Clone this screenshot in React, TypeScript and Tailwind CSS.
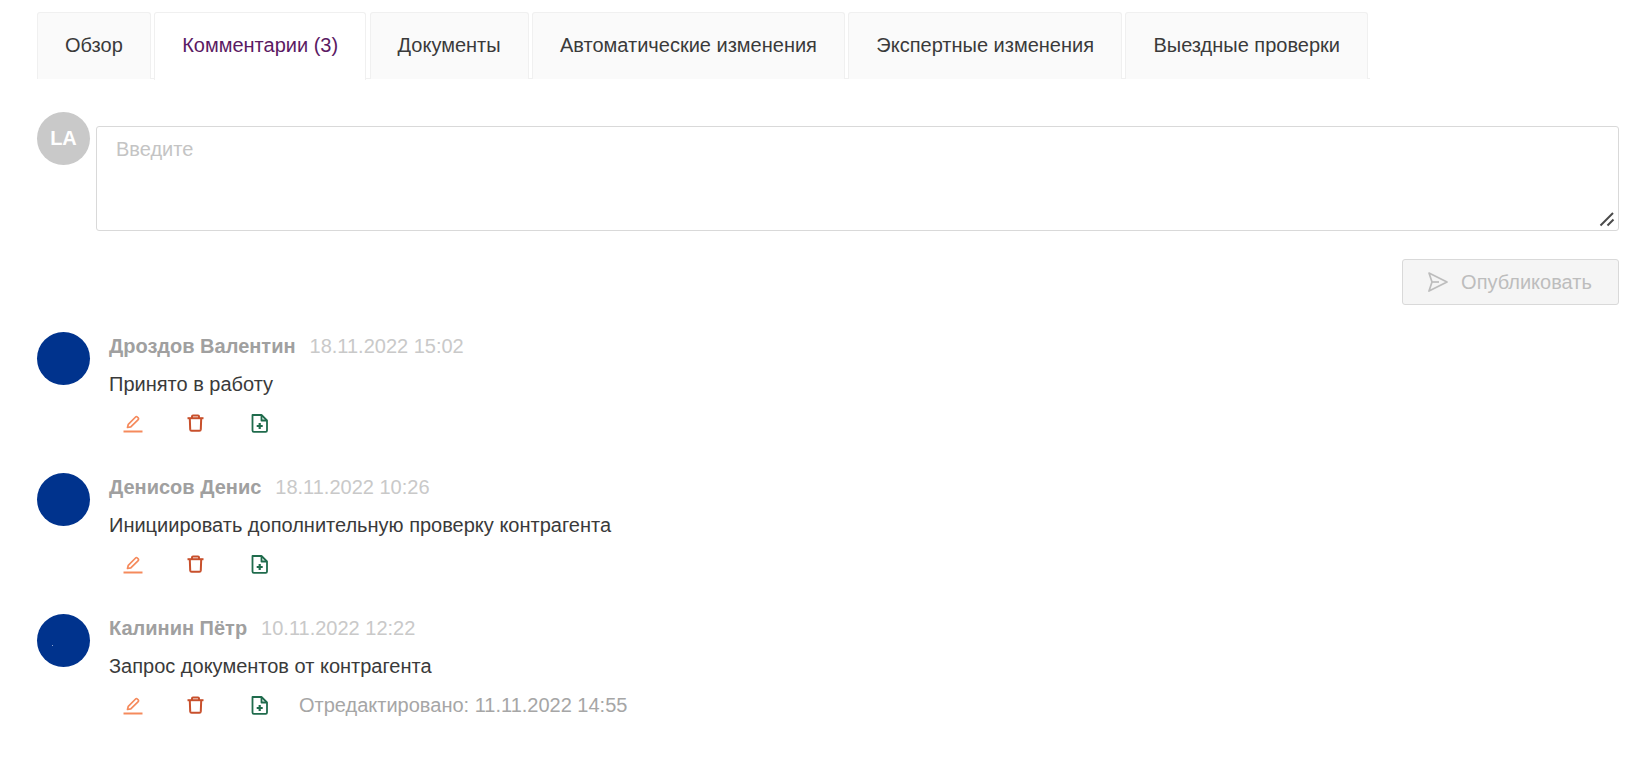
const TABS = [
  { label: "Обзор", active: false },
  { label: "Комментарии (3)", active: true },
  { label: "Документы", active: false },
  { label: "Автоматические изменения", active: false },
  { label: "Экспертные изменения", active: false },
  { label: "Выездные проверки", active: false },
];

const COMMENTS = [
  { author: "Дроздов Валентин", date: "18.11.2022 15:02", text: "Принято в работу", edited: "" },
  { author: "Денисов Денис", date: "18.11.2022 10:26", text: "Инициировать дополнительную проверку контрагента", edited: "" },
  { author: "Калинин Пётр", date: "10.11.2022 12:22", text: "Запрос документов от контрагента", edited: "Отредактировано: 11.11.2022 14:55" },
];

const EditIcon = () => (
  <svg width="20" height="20" viewBox="0 0 20 20" fill="none" stroke="#f58a5c" strokeWidth="1.7" strokeLinejoin="round">
    <path d="M4.5 14.5 L5.3 11.3 L12.6 4 a1.2 1.2 0 0 1 1.7 0 L15.2 4.9 a1.2 1.2 0 0 1 0 1.7 L7.8 13.9 Z" />
    <path d="M0.5 18.5 H19.5" strokeWidth="2" />
  </svg>
);

const TrashIcon = () => (
  <svg width="17" height="18" viewBox="0 0 17 18" fill="none" stroke="#c8502c" strokeWidth="2" strokeLinejoin="round">
    <path d="M0.5 4.2 H16.5" />
    <path d="M5 4 V2.4 a1 1 0 0 1 1 -1 H11 a1 1 0 0 1 1 1 V4" />
    <path d="M2.8 4.2 L3.2 15.4 a1.4 1.4 0 0 0 1.4 1.3 H12.4 a1.4 1.4 0 0 0 1.4 -1.3 L14.2 4.2" />
  </svg>
);

const NoteIcon = () => (
  <svg width="17" height="19" viewBox="0 0 17 19" fill="none" stroke="#1f6b4c" strokeWidth="1.8" strokeLinejoin="round">
    <path d="M1.5 1 H10.5 L16 6.5 V16.6 a1.3 1.3 0 0 1 -1.3 1.3 H2.8 a1.3 1.3 0 0 1 -1.3 -1.3 Z" />
    <path d="M10.5 1 V6.5 H16" />
    <path d="M8.7 9 V15 M5.7 12 H11.7" strokeWidth="2.2" />
  </svg>
);

const SendIcon = () => (
  <svg width="22" height="22" viewBox="0 0 22 22" fill="none" stroke="#bdbdbd" strokeWidth="1.7" strokeLinejoin="round">
    <path d="M2 2 L20 11 L2 20 L5 11 Z" />
    <path d="M5 11 H12" />
  </svg>
);

const ResizeHandle = () => (
  <svg className="absolute right-[3px] bottom-[3px]" width="16" height="16" viewBox="0 0 16 16" fill="none" stroke="#4a4a4a" strokeWidth="2">
    <path d="M1.5 14.5 L14 2" />
    <path d="M8.5 14.5 L14.5 8.5" />
  </svg>
);

export default function App() {
  return (
    <div className="min-h-screen bg-white pt-3 pl-[37px] pr-[10px] font-['Liberation_Sans',Arial,sans-serif]">
      <div className="flex w-[1333px] gap-[3.4px] h-[67px] border-b border-[#f0f0f0]">
        {TABS.map((tab) => (
          <div
            key={tab.label}
            className={
              tab.active
                ? "flex h-[68px] shrink-0 items-center whitespace-nowrap rounded-t-[3px] border border-b-0 border-[#f0f0f0] bg-white px-[27px] pb-[3px] text-[20px] text-[#5b1a63]"
                : "flex h-[67px] shrink-0 items-center whitespace-nowrap rounded-t-[3px] border border-b-0 border-[#f0f0f0] bg-[#fafafa] px-[27px] pb-[3px] text-[20px] text-[#3a3a3a]"
            }
          >
            {tab.label}
          </div>
        ))}
      </div>

      <div className="mt-[33px] flex gap-[6px]">
        <div className="flex h-[53px] w-[53px] shrink-0 items-center justify-center rounded-full bg-[#c9c9c9] pb-[2px] text-[20px] font-bold text-white">
          LA
        </div>
        <div className="relative mt-[14px] h-[105px] flex-1 rounded-[3px] border border-[#d9d9d9] px-[19px] py-[7px] text-[20px] text-[#c4c4c4]">
          Введите
          <ResizeHandle />
        </div>
      </div>

      <div className="mt-7 flex justify-end">
        <div className="flex h-[46px] w-[217px] items-center justify-center gap-[12px] rounded-[3px] border border-[#d9d9d9] bg-[#f5f5f5] pr-[2px] text-[20px] text-[#bdbdbd]">
          <SendIcon />
          Опубликовать
        </div>
      </div>

      <div className="mt-[27px] flex flex-col gap-[33px]">
        {COMMENTS.map((comment) => (
          <div key={comment.author} className="flex gap-[19px]">
            <div className="relative h-[53px] w-[53px] shrink-0 rounded-full bg-[#00338d]">
              {comment.edited && <div className="absolute left-[15px] top-[31px] h-px w-px bg-[#8fa6d0]" />}
            </div>
            <div className="flex flex-col">
              <div className="flex h-[28px] items-center gap-[14px] text-[20px]">
                <span className="font-bold text-[#a0a0a0]">{comment.author}</span>
                <span className="text-[#c9c9c9]">{comment.date}</span>
              </div>
              <div className="mt-[10px] h-[28px] text-[20px] leading-[28px] text-[#3a3a3a]">{comment.text}</div>
              <div className="mt-[8px] flex h-[34px] items-center pl-[14px] text-[20px] text-[#a6a6a6]">
                <div className="flex w-[64px]"><EditIcon /></div>
                <div className="flex w-[64px]"><TrashIcon /></div>
                <div className="flex w-[48px]"><NoteIcon /></div>
                {comment.edited && <span>{comment.edited}</span>}
              </div>
            </div>
          </div>
        ))}
      </div>
    </div>
  );
}
